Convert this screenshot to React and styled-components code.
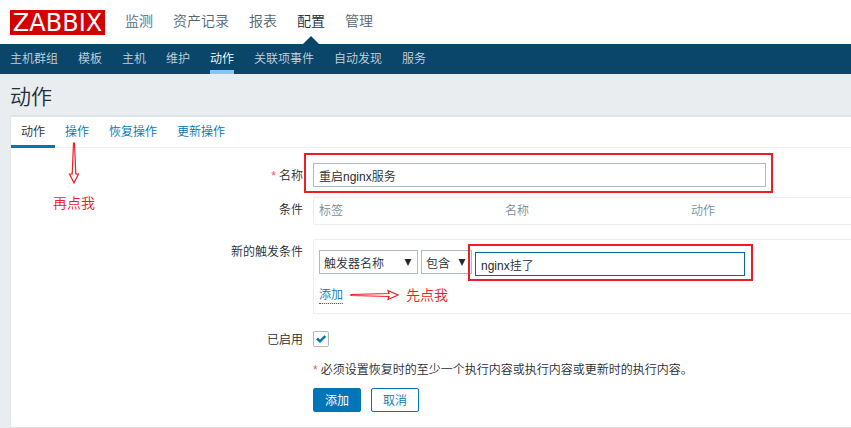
import { useState } from 'react';
import styled, { createGlobalStyle } from 'styled-components';

const colors = {
  text: '#1f2c33',
  muted: '#768d99',
  nav: '#0a466a',
  link: '#0275b8',
  line: '#ebeef0',
  panelLine: '#dfe4e7',
  inputLine: '#acbbc2',
  note: '#ee1c25',
};

const GlobalStyle = createGlobalStyle`
  * {
    box-sizing: border-box;
  }

  body {
    margin: 0;
    background-color: #e9edf0;
    color: ${colors.text};
    font-family: 'Liberation Sans', 'Noto Sans CJK SC', sans-serif;
    font-size: 12px;
    font-weight: 350;
    line-height: 18px;
  }

  button, input, select {
    font: inherit;
    color: inherit;
  }

  a {
    text-decoration: none;
  }
`;

const Header = styled.header`
  display: flex;
  align-items: center;
  gap: 20px;
  height: 44px;
  padding: 0 10px;
  background-color: white;
`;

const Logo = styled.a`
  width: 95px;
  height: 25px;
  background-color: #d40000;
  color: white;
  font-family: 'DejaVu Sans', sans-serif;
  font-size: 24px;
  font-weight: 400;
  line-height: 26px;
  text-align: center;
`;

const MainMenu = styled.nav`
  display: flex;
  align-self: stretch;
  gap: 20px;
`;

const MainLink = styled.a`
  position: relative;
  color: ${({ $active }) => ($active ? colors.text : '#54666f')};
  font-size: 14px;
  line-height: 42px;

  &::after {
    content: '';
    display: ${({ $active }) => ($active ? 'block' : 'none')};
    position: absolute;
    bottom: 0;
    left: 50%;
    margin-left: -8px;
    border: 8px solid transparent;
    border-top: 0;
    border-bottom-color: ${colors.nav};
  }
`;

const SubMenu = styled.nav`
  display: flex;
  gap: 20px;
  height: 30px;
  padding: 0 10px;
  background-color: ${colors.nav};
`;

const SubLink = styled.a`
  border-bottom: 4px solid ${({ $active }) => ($active ? '#7fc8f8' : 'transparent')};
  color: ${({ $active }) => ($active ? 'white' : '#c5d4de')};
  line-height: 30px;
`;

const PageTitle = styled.h1`
  margin: 0;
  padding: 8px 10px 3px;
  font-size: 21px;
  font-weight: inherit;
  line-height: 30px;
`;

const Panel = styled.main`
  margin-left: 10px;
  border: 1px solid ${colors.panelLine};
  border-width: 2px 0 1px 1px;
  background-color: white;
`;

const Tabs = styled.div`
  display: flex;
  border-bottom: 1px solid ${colors.line};
`;

const Tab = styled.button`
  position: relative;
  height: 31px;
  margin-bottom: -1px;
  padding: 2px 10px 0;
  border: 0;
  border-bottom: 3px solid ${({ $active }) => ($active ? colors.link : 'transparent')};
  background: none;
  color: ${({ $active }) => ($active ? colors.text : colors.link)};
  line-height: 26px;
`;

const TabHint = styled.span`
  position: absolute;
  top: 25px;
  left: -2px;
  display: flex;
  flex-direction: column;
  align-items: center;
  gap: 10px;
  pointer-events: none;
`;

const HintText = styled.span`
  color: ${colors.note};
  font-size: 14px;
  line-height: 18px;
  white-space: nowrap;
`;

const Form = styled.form`
  display: grid;
  gap: 10px;
  padding: 15px 0;
`;

const Row = styled.div`
  display: grid;
  grid-template-columns: 292px minmax(0, 1fr);
  column-gap: 10px;
  padding-bottom: ${({ $tall }) => ($tall ? '4px' : '0')};
`;

const Label = styled.label`
  grid-column: 1;
  padding-top: 2px;
  line-height: ${({ $short }) => ($short ? '20px' : '22px')};
  text-align: right;
`;

const Field = styled.div`
  grid-column: 2;
  display: flex;
  align-items: center;
  gap: 10px;
`;

const Asterisk = styled.span`
  margin-right: 3px;
  color: #e45959;
`;

const Note = styled.p`
  margin: 0;
  padding-top: 2px;
  line-height: 16px;
`;

const Marked = styled.div`
  position: relative;
  display: flex;
  align-self: flex-end;

  &::after {
    content: '';
    position: absolute;
    inset: ${({ $inset }) => $inset};
    border: 2px solid ${colors.note};
    pointer-events: none;
  }
`;

const TextInput = styled.input`
  width: ${({ $width }) => $width};
  height: 24px;
  padding: 0 5px;
  border: 1px solid ${({ $focused }) => ($focused ? '#0a66a0' : colors.inputLine)};
  background-color: white;
  outline: 0;
`;

const Conditions = styled.table`
  width: 100%;
  height: 28px;
  border: 1px solid ${colors.line};
  border-right: 0;
  border-spacing: 0;
  table-layout: fixed;

  th {
    padding: 0 5px;
    color: ${colors.muted};
    font-weight: inherit;
    text-align: left;
  }

  th:not(:last-child) {
    width: 186px;
  }
`;

const NewCondition = styled.div`
  display: flex;
  flex: 1;
  flex-direction: column;
  gap: 10px;
  padding: 10px 5px 9px;
  border: 1px solid ${colors.line};
  border-right: 0;
`;

const Controls = styled.div`
  display: flex;
  align-items: flex-start;
  gap: 3px;
  height: 26px;
`;

const SelectBox = styled.div`
  position: relative;
  width: ${({ $width }) => $width};

  svg {
    position: absolute;
    top: 9px;
    right: 6px;
    pointer-events: none;
  }
`;

const Select = styled.select`
  display: block;
  width: 100%;
  height: 24px;
  padding: 3px 4px 0;
  border: 1px solid ${colors.inputLine};
  border-radius: 0;
  background-color: white;
  appearance: none;
`;

const LinkLine = styled.div`
  display: flex;
  align-items: center;
  gap: 7px;
`;

const AddLink = styled.a`
  padding-top: 1px;
  border-bottom: 1px dotted ${colors.link};
  color: ${colors.link};
  line-height: 15px;
`;

const Checkbox = styled.span`
  position: relative;
  display: flex;

  input {
    width: 16px;
    height: 16px;
    margin: 0;
    border: 1px solid ${colors.inputLine};
    border-radius: 2px;
    background-color: white;
    appearance: none;
  }

  svg {
    position: absolute;
    top: 4px;
    left: 3px;
    display: none;
    pointer-events: none;
  }

  input:checked + svg {
    display: block;
  }
`;

const Button = styled.button`
  min-width: 48px;
  height: 24px;
  padding: 2px 11px 0;
  border: 1px solid ${colors.link};
  border-radius: 2px;
  background-color: ${({ $primary }) => ($primary ? colors.link : 'white')};
  color: ${({ $primary }) => ($primary ? 'white' : colors.link)};
  font-weight: ${({ $primary }) => ($primary ? '400' : 'inherit')};
  line-height: 20px;
`;

const DownArrow = () => (
  <svg width="12" height="42" viewBox="0 0 12 42" fill="white" stroke={colors.note} strokeWidth="1.2">
    <path d="M5.5 1 L4.2 32 L1.5 32 L6 41 L10.5 32 L7.8 32 L6.5 1 Z" />
  </svg>
);

const RightArrow = () => (
  <svg width="49" height="12" viewBox="0 0 49 12" fill="white" stroke={colors.note} strokeWidth="1.2">
    <path d="M1 5.5 L39 4.5 L38 1.5 L48 6 L38 10.5 L39 7.5 L1 6.5 Z" />
  </svg>
);

const Caret = () => (
  <svg width="8" height="7" viewBox="0 0 8 7" fill={colors.text}>
    <path d="M0.5 0 H7.5 L4 7 Z" />
  </svg>
);

const mainMenu = ['监测', '资产记录', '报表', '配置', '管理'];
const subMenu = ['主机群组', '模板', '主机', '维护', '动作', '关联项事件', '自动发现', '服务'];
const tabs = ['动作', '操作', '恢复操作', '更新操作'];

const App = () => {
  const [name, setName] = useState('重启nginx服务');
  const [value, setValue] = useState('nginx挂了');
  const [enabled, setEnabled] = useState(true);

  return (
    <>
      <GlobalStyle />
      <Header>
        <Logo href="#">ZABBIX</Logo>
        <MainMenu>
          {mainMenu.map((item) => (
            <MainLink key={item} href="#" $active={item === '配置'}>{item}</MainLink>
          ))}
        </MainMenu>
      </Header>
      <SubMenu>
        {subMenu.map((item) => (
          <SubLink key={item} href="#" $active={item === '动作'}>{item}</SubLink>
        ))}
      </SubMenu>
      <PageTitle>动作</PageTitle>
      <Panel>
        <Tabs>
          {tabs.map((item) => (
            <Tab key={item} type="button" $active={item === '动作'}>
              {item}
              {item === '操作' && (
                <TabHint>
                  <DownArrow />
                  <HintText>再点我</HintText>
                </TabHint>
              )}
            </Tab>
          ))}
        </Tabs>
        <Form onSubmit={(e) => e.preventDefault()}>
          <Row>
            <Label htmlFor="name">
              <Asterisk>*</Asterisk>
              名称
            </Label>
            <Field>
              <Marked $inset="-10px -7px -6px -9px">
                <TextInput
                  id="name"
                  $width="453px"
                  value={name}
                  onChange={(e) => setName(e.target.value)}
                />
              </Marked>
            </Field>
          </Row>
          <Row $tall>
            <Label as="span" id="conditions">条件</Label>
            <Field>
              <Conditions aria-labelledby="conditions">
                <thead>
                  <tr>
                    <th>标签</th>
                    <th>名称</th>
                    <th>动作</th>
                  </tr>
                </thead>
              </Conditions>
            </Field>
          </Row>
          <Row $tall>
            <Label htmlFor="type">新的触发条件</Label>
            <Field>
              <NewCondition>
                <Controls>
                  <SelectBox $width="99px">
                    <Select id="type">
                      <option>触发器名称</option>
                    </Select>
                    <Caret />
                  </SelectBox>
                  <SelectBox $width="51px">
                    <Select aria-label="运算符">
                      <option>包含</option>
                    </Select>
                    <Caret />
                  </SelectBox>
                  <Marked $inset="-8px -8px -5px -7px">
                    <TextInput
                      $focused
                      $width="270px"
                      aria-label="值"
                      value={value}
                      onChange={(e) => setValue(e.target.value)}
                    />
                  </Marked>
                </Controls>
                <LinkLine>
                  <AddLink href="#">添加</AddLink>
                  <RightArrow />
                  <HintText>先点我</HintText>
                </LinkLine>
              </NewCondition>
            </Field>
          </Row>
          <Row>
            <Label $short htmlFor="enabled">已启用</Label>
            <Field>
              <Checkbox>
                <input
                  id="enabled"
                  type="checkbox"
                  checked={enabled}
                  onChange={(e) => setEnabled(e.target.checked)}
                />
                <svg width="10" height="8" viewBox="0 0 10 8" fill="none" stroke={colors.link} strokeWidth="2.4">
                  <path d="M1 3.5 L4 6.3 L9.2 1" />
                </svg>
              </Checkbox>
            </Field>
          </Row>
          <Row>
            <Field>
              <Note>
                <Asterisk>*</Asterisk>
                必须设置恢复时的至少一个执行内容或执行内容或更新时的执行内容。
              </Note>
            </Field>
          </Row>
          <Row>
            <Field>
              <Button type="submit" $primary>添加</Button>
              <Button type="button">取消</Button>
            </Field>
          </Row>
        </Form>
      </Panel>
    </>
  );
};

export default App;
